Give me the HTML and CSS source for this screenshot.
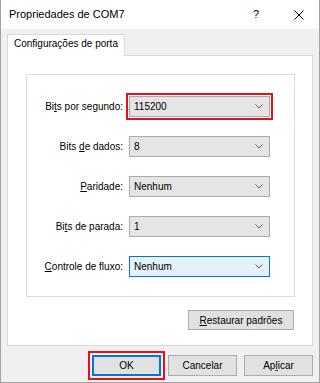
FILE: index.html
```html
<!DOCTYPE html>
<html lang="pt">
  <head>
    <meta charset="UTF-8" />
    <meta name="viewport" content="width=device-width, initial-scale=1.0" />
    <title>Propriedades de COM7</title>
    <link rel="stylesheet" href="styles.css">
  </head>
  <body>
    <div class="window">
      <div class="titlebar">
        <span class="title">Propriedades de COM7</span>
        <span class="help">?</span>
        <span class="close">
          <svg width="10" height="10" viewBox="0 0 10 10">
            <path d="M0.5 0.5 L9.5 9.5 M9.5 0.5 L0.5 9.5" stroke="#000" stroke-width="1" fill="none" />
          </svg>
        </span>
      </div>

      <div class="content">
        <div class="tabs">
          <div class="tab active">Configurações de porta</div>
        </div>

        <div class="panel">
          <div class="frame">
            <div class="field-label">Bi<u>t</u>s por segundo:</div>
            <div class="combo marked">
              <span>115200</span>
              <svg class="chevron" width="8" height="5" viewBox="0 0 8 5"><path d="M0.5 0.5 L4 4 L7.5 0.5" stroke="#5a5a5a" fill="none" /></svg>
            </div>

            <div class="field-label">Bits <u>d</u>e dados:</div>
            <div class="combo">
              <span>8</span>
              <svg class="chevron" width="8" height="5" viewBox="0 0 8 5"><path d="M0.5 0.5 L4 4 L7.5 0.5" stroke="#5a5a5a" fill="none" /></svg>
            </div>

            <div class="field-label"><u>P</u>aridade:</div>
            <div class="combo">
              <span>Nenhum</span>
              <svg class="chevron" width="8" height="5" viewBox="0 0 8 5"><path d="M0.5 0.5 L4 4 L7.5 0.5" stroke="#5a5a5a" fill="none" /></svg>
            </div>

            <div class="field-label">Bi<u>t</u>s de parada:</div>
            <div class="combo">
              <span>1</span>
              <svg class="chevron" width="8" height="5" viewBox="0 0 8 5"><path d="M0.5 0.5 L4 4 L7.5 0.5" stroke="#5a5a5a" fill="none" /></svg>
            </div>

            <div class="field-label"><u>C</u>ontrole de fluxo:</div>
            <div class="combo hover">
              <span>Nenhum</span>
              <svg class="chevron" width="8" height="5" viewBox="0 0 8 5"><path d="M0.5 0.5 L4 4 L7.5 0.5" stroke="#5a5a5a" fill="none" /></svg>
            </div>
          </div>

          <div class="panel-actions">
            <button class="btn btn-wide"><u>R</u>estaurar padrões</button>
          </div>
        </div>

        <div class="dialog-actions">
          <button class="btn default marked">OK</button>
          <button class="btn">Cancelar</button>
          <button class="btn">Ap<u>l</u>icar</button>
        </div>
      </div>
    </div>
  </body>
</html>
```

FILE: styles.css
```css
* {
  box-sizing: border-box;
}
body {
  margin: 0;
  font-family: "Liberation Sans", Arial, sans-serif;
  font-size: 10px;
  color: #000;
  background-color: #fff;
}
.window {
  width: 320px;
  height: 383px;
  border: 1px solid #a3a3a3;
  border-top: none;
  background-color: #f0f0f0;
  display: flex;
  flex-direction: column;
}
.titlebar {
  height: 29px;
  background-color: #fff;
  display: flex;
  align-items: center;
  padding-left: 8px;
}
.title {
  font-size: 11px;
  flex: 1;
  padding-bottom: 1px;
}
.help {
  font-size: 11px;
  margin-right: 35px;
  padding-bottom: 1px;
}
.close {
  display: flex;
  margin-right: 15px;
}
.content {
  flex: 1;
  padding: 5px 6px 0;
}
.tabs {
  display: flex;
  height: 21px;
  position: relative;
  z-index: 1;
}
.tab {
  width: 118px;
  height: 22px;
  padding: 3px 0 0 6px;
  border: 1px solid #d9d9d9;
  border-bottom: none;
  background-color: #fff;
}
.panel {
  height: 291px;
  background-color: #fff;
  border: 1px solid #d9d9d9;
  padding: 18px 17px 0 18px;
}
.frame {
  height: 223px;
  border: 1px solid #dcdcdc;
  padding-top: 21px;
  display: grid;
  grid-template-columns: 96px 141px;
  grid-auto-rows: 21px;
  column-gap: 6px;
  row-gap: 19px;
  align-content: start;
}
.field-label {
  text-align: right;
  align-self: center;
  padding-bottom: 1px;
}
.combo {
  display: flex;
  align-items: center;
  justify-content: space-between;
  padding: 0 6px 0 4px;
  background-color: #e5e5e5;
  border: 1px solid #acacac;
}
.combo.hover {
  background-color: #e5f1fb;
  border-color: #0078d7;
}
.chevron {
  display: block;
}
.marked {
  outline: 2px solid #e0131b;
  outline-offset: 1px;
}
.panel-actions {
  display: flex;
  justify-content: flex-end;
  margin-top: 13px;
  padding-right: 1px;
}
.btn {
  font-family: "Liberation Sans", Arial, sans-serif;
  font-size: 10px;
  color: #000;
  width: 69px;
  height: 21px;
  padding: 0;
  background-color: #e1e1e1;
  border: 1px solid #adadad;
}
.btn-wide {
  width: 106px;
  height: 20px;
}
.btn.default {
  border: 2px solid #0078d7;
}
.btn.default.marked {
  outline-offset: 2px;
}
.dialog-actions {
  display: flex;
  justify-content: flex-end;
  gap: 7px;
  margin-top: 9px;
}
```
